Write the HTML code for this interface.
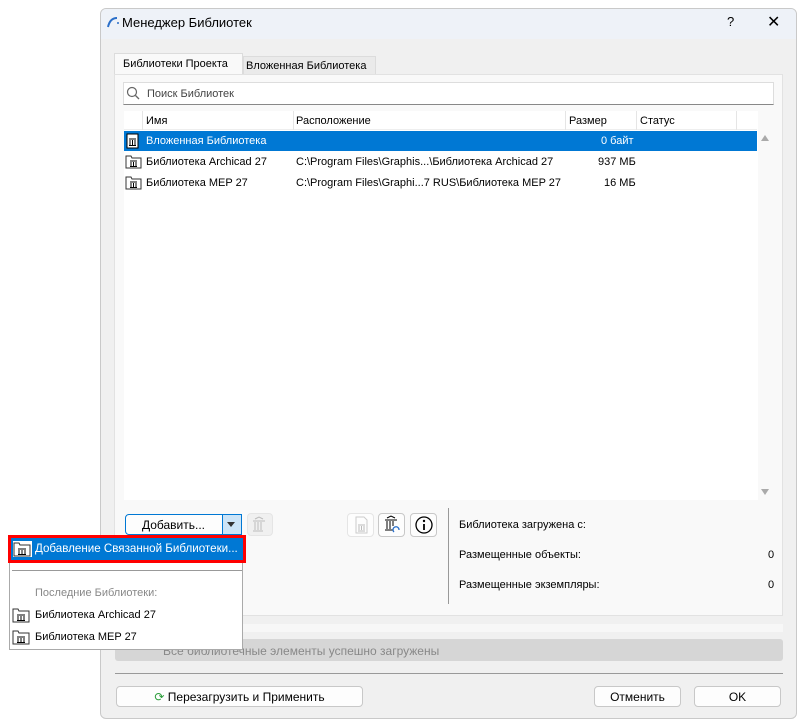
<!DOCTYPE html>
<html><head><meta charset="utf-8"><style>
*{box-sizing:border-box;margin:0;padding:0}
body{width:807px;height:726px;background:#fff;font-family:"Liberation Sans",sans-serif;font-size:11px;color:#000;position:relative;overflow:hidden}
.a{position:absolute}
.btn{position:absolute;background:#fdfdfd;border:1px solid #c8c8c8;border-radius:4px;text-align:center;font-size:12px;line-height:20px}
.t{position:absolute;white-space:nowrap;font-size:11px}
</style></head><body>
<div class="a" style="left:100px;top:8px;width:697px;height:711px;background:#f0f0f0;border:1px solid #c9c9c9;border-radius:6px;overflow:hidden">
 <div class="a" style="left:0;top:0;width:697px;height:30px;background:#eef2f8"></div>
</div>
<svg class="a" style="left:106px;top:15px" width="14" height="14"><path d="M2 12 Q4 3 11 3" stroke="#2a6fc9" stroke-width="2" fill="none"/><circle cx="12" cy="8" r="1" fill="#2a6fc9"/></svg>
<div class="t" style="left:122px;top:15px;font-size:13px">Менеджер Библиотек</div>
<div class="t" style="left:727px;top:14px;font-size:13px">?</div>
<div class="t" style="left:767px;top:12px;font-size:16px">✕</div>
<!-- tabs -->
<div class="a" style="left:114px;top:53px;width:129px;height:22px;background:#f9f9f9;border:1px solid #dcdcdc;border-bottom:none"></div>
<div class="t" style="left:123px;top:58px">Библиотеки Проекта</div>
<div class="a" style="left:243px;top:56px;width:133px;height:18px;background:#eaeaea;border:1px solid #dcdcdc;border-bottom:none"></div>
<div class="t" style="left:246px;top:60px">Вложенная Библиотека</div>
<div class="a" style="left:114px;top:74px;width:669px;height:542px;background:#f9f9f9;border:1px solid #e2e2e2"></div>
<div class="a" style="left:123px;top:82px;width:651px;height:23px;background:#fff;border:1px solid #ddd;border-bottom:1px solid #888"></div>
<svg class="a" style="left:126px;top:86px" width="14" height="14"><circle cx="6" cy="6" r="4.5" stroke="#666" fill="none" stroke-width="1.2"/><path d="M9.5 9.5 L13 13" stroke="#666" stroke-width="1.3"/></svg>
<div class="t" style="left:147px;top:88px;color:#444">Поиск Библиотек</div>
<!-- table -->
<div class="a" style="left:124px;top:111px;width:634px;height:389px;background:#fff"></div>
<div class="a" style="left:124px;top:111px;width:633px;height:19px;background:#fff;border-bottom:1px solid #eee"></div>
<div class="a" style="left:142px;top:111px;width:1px;height:19px;background:#e5e5e5"></div>
<div class="a" style="left:293px;top:111px;width:1px;height:19px;background:#e5e5e5"></div>
<div class="a" style="left:565px;top:111px;width:1px;height:19px;background:#e5e5e5"></div>
<div class="a" style="left:636px;top:111px;width:1px;height:19px;background:#e5e5e5"></div>
<div class="a" style="left:736px;top:111px;width:1px;height:19px;background:#e5e5e5"></div>
<div class="t" style="left:146px;top:115px">Имя</div>
<div class="t" style="left:296px;top:115px">Расположение</div>
<div class="t" style="left:569px;top:115px">Размер</div>
<div class="t" style="left:640px;top:115px">Статус</div>
<div class="a" style="left:124px;top:131px;width:633px;height:20px;background:#0078d4"></div>
<div class="t" style="left:146px;top:135px;color:#fff">Вложенная Библиотека</div>
<div class="t" style="left:601px;top:135px;color:#fff">0 байт</div>
<div class="t" style="left:146px;top:156px">Библиотека Archicad 27</div>
<div class="t" style="left:296px;top:156px">C:\Program Files\Graphis...\Библиотека Archicad 27</div>
<div class="t" style="left:598px;top:156px">937 МБ</div>
<div class="t" style="left:146px;top:177px">Библиотека MEP 27</div>
<div class="t" style="left:296px;top:177px">C:\Program Files\Graphi...7 RUS\Библиотека MEP 27</div>
<div class="t" style="left:604px;top:177px">16 МБ</div>
<svg class="a" style="left:126px;top:133px" width="14" height="16"><rect x="1" y="1" width="11" height="14" fill="#fff" stroke="#000"/><path d="M3 6h7M4 7v5M6.5 7v5M9 7v5M3 12.5h7" stroke="#000"/></svg>
<svg class="a" style="left:125px;top:154px" width="17" height="15"><path d="M1 2h5l1 2h9v10H1z" fill="#fff" stroke="#333"/><path d="M5 7h7M6 8v4M8.5 8v4M11 8v4M5 12.5h7" stroke="#000"/></svg>
<svg class="a" style="left:125px;top:175px" width="17" height="15"><path d="M1 2h5l1 2h9v10H1z" fill="#fff" stroke="#333"/><path d="M5 7h7M6 8v4M8.5 8v4M11 8v4M5 12.5h7" stroke="#000"/></svg>
<div class="a" style="left:761px;top:135px;width:0;height:0;border-left:4px solid transparent;border-right:4px solid transparent;border-bottom:6px solid #aaa"></div>
<div class="a" style="left:761px;top:489px;width:0;height:0;border-left:4px solid transparent;border-right:4px solid transparent;border-top:6px solid #aaa"></div>
<!-- bottom controls -->
<div class="btn" style="left:125px;top:514px;width:117px;height:21px;border-color:#0078d4;border-radius:4px 0 0 4px;text-indent:-20px">Добавить...</div>
<div class="a" style="left:222px;top:514px;width:20px;height:21px;background:#cce4f7;border:1px solid #0078d4"></div>
<div class="a" style="left:227px;top:522px;border-left:4px solid transparent;border-right:4px solid transparent;border-top:5px solid #333"></div>
<div class="btn" style="left:247px;top:513px;width:26px;height:23px;background:#f0f0f0;border-color:#e5e5e5"><svg width="18" height="18" style="margin-top:2px"><path d="M2 5h12M4 6v8M7 6v8M10 6v8M2 15h10M4 3l4-2 4 2" stroke="#bbb" fill="none"/></svg></div>
<div class="btn" style="left:347px;top:513px;width:27px;height:24px;border-color:#e5e5e5"><svg width="18" height="18" style="margin-top:2px"><path d="M4 1h8l3 3v13H4z" fill="none" stroke="#ccc"/><path d="M6 9h7M7 10v4M9.5 10v4M12 10v4M6 15h7" stroke="#bbb"/></svg></div>
<div class="btn" style="left:378px;top:513px;width:27px;height:24px"><svg width="20" height="20" style="margin-top:1px"><path d="M3 5h12M5 6v8M8 6v8M11 6v5M3 15h8M5 3l4-2 4 2" stroke="#000" fill="none"/><path d="M12 17a3 3 0 1 1 5-2" stroke="#2a6fc9" fill="none" stroke-width="1.3"/></svg></div>
<div class="btn" style="left:410px;top:513px;width:27px;height:24px"><svg width="20" height="20" style="margin-top:1px"><circle cx="10" cy="10" r="8" fill="none" stroke="#000" stroke-width="1.3"/><circle cx="10" cy="6" r="1.2"/><path d="M10 9v6" stroke="#000" stroke-width="1.8"/></svg></div>
<div class="a" style="left:448px;top:508px;width:1px;height:96px;background:#999"></div>
<div class="t" style="left:459px;top:519px">Библиотека загружена с:</div>
<div class="t" style="left:459px;top:549px">Размещенные объекты:</div>
<div class="t" style="left:768px;top:549px">0</div>
<div class="t" style="left:459px;top:579px">Размещенные экземпляры:</div>
<div class="t" style="left:768px;top:579px">0</div>
<div class="a" style="left:114px;top:624px;width:669px;height:8px;background:#f7f7f7"></div>
<div class="a" style="left:115px;top:639px;width:668px;height:22px;background:#d6d6d6;border-radius:3px"></div>
<div class="t" style="left:163px;top:644px;color:#888;font-size:12px">Все библиотечные элементы успешно загружены</div>
<div class="a" style="left:115px;top:673px;width:668px;height:1px;background:#999"></div>
<div class="btn" style="left:116px;top:686px;width:247px;height:21px"><span style="color:#2a9d3a">⟳</span> Перезагрузить и Применить</div>
<div class="btn" style="left:594px;top:686px;width:87px;height:21px">Отменить</div>
<div class="btn" style="left:694px;top:686px;width:87px;height:21px">OK</div>
<!-- dropdown -->
<div class="a" style="left:9px;top:535px;width:234px;height:115px;background:#fff;border:1px solid #aaa"></div>
<div class="a" style="left:8px;top:535px;width:238px;height:28px;border:3px solid #f00;background:#0078d4"></div>
<svg class="a" style="left:13px;top:541px" width="19" height="16"><rect width="19" height="16" fill="#fff"/><path d="M1 2h5l1 2h10v11H1z" fill="#fff" stroke="#333"/><path d="M5 8h8M6 9v4M9 9v4M12 9v4M5 13.5h8" stroke="#000"/></svg>
<div class="t" style="left:35px;top:542px;color:#fff;font-size:11.6px">Добавление Связанной Библиотеки...</div>
<div class="a" style="left:12px;top:570px;width:230px;height:1px;background:#999"></div>
<div class="t" style="left:35px;top:587px;color:#888">Последние Библиотеки:</div>
<svg class="a" style="left:12px;top:607px" width="19" height="16"><path d="M1 2h5l1 2h10v11H1z" fill="#fff" stroke="#333"/><path d="M5 8h8M6 9v4M9 9v4M12 9v4M5 13.5h8" stroke="#000"/></svg>
<div class="t" style="left:35px;top:609px">Библиотека Archicad 27</div>
<svg class="a" style="left:12px;top:629px" width="19" height="16"><path d="M1 2h5l1 2h10v11H1z" fill="#fff" stroke="#333"/><path d="M5 8h8M6 9v4M9 9v4M12 9v4M5 13.5h8" stroke="#000"/></svg>
<div class="t" style="left:35px;top:631px">Библиотека MEP 27</div>
</body></html>
